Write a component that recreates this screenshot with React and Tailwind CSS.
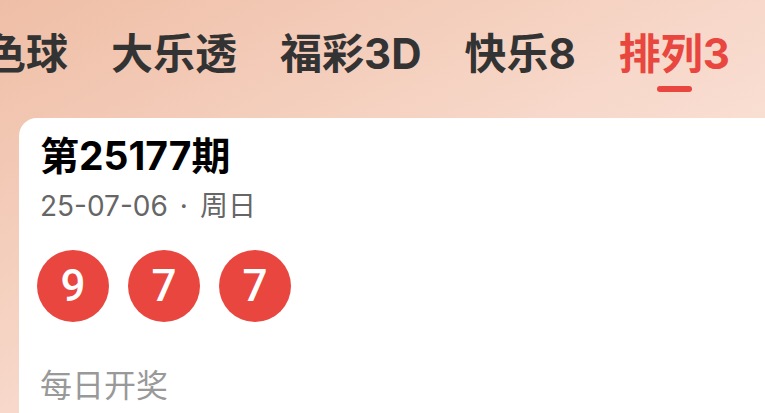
import React from "react";

const cjk = { fontFamily: 'Inter, "Noto Sans CJK SC", "Noto Sans", sans-serif' };

export default function App() {
  const tabs = ["双色球", "大乐透", "福彩3D", "快乐8", "排列3"];
  return (
    <div className="w-[765px] h-[413px] overflow-hidden bg-gradient-to-br from-[#efbea6] via-[#f7d8ca] to-[#fdeee6]" style={cjk}>
      <div className="flex items-start gap-[43px] h-[118px] pt-[26px] -ml-[58px] whitespace-nowrap">
        {tabs.map((t, i) => (
          <div key={t} className="flex flex-col items-center">
            <div className={`text-[42px] leading-[56px] font-bold ${i === 4 ? "text-[#e8463e]" : "text-[#333333]"}`}>{t}</div>
            {i === 4 && <div className="mt-[4px] w-[35px] h-[6px] rounded-full bg-[#e8463e]" />}
          </div>
        ))}
      </div>
      <div className="ml-[19px] bg-white rounded-tl-[18px] h-[320px] pl-[21px] pt-[15px]">
        <div className="text-[39px] leading-[46px] font-bold text-black">第25177期</div>
        <div className="text-[28px] leading-[36px] text-[#666666] mt-[9px] flex items-center">
          <span>25-07-06</span>
          <span className="mx-[12px]">·</span>
          <span>周日</span>
        </div>
        <div className="flex gap-[19px] mt-[26px] -ml-[3px]">
          {["9", "7", "7"].map((n, i) => (
            <div key={i} className="w-[72px] h-[72px] rounded-full bg-[#e8463e] flex items-center justify-center text-white text-[44px] font-medium" style={{ fontFamily: 'Roboto, "Noto Sans", sans-serif' }}>{n}</div>
          ))}
        </div>
        <div className="text-[32px] leading-[40px] text-[#999999] mt-[44px]">每日开奖</div>
      </div>
    </div>
  );
}
